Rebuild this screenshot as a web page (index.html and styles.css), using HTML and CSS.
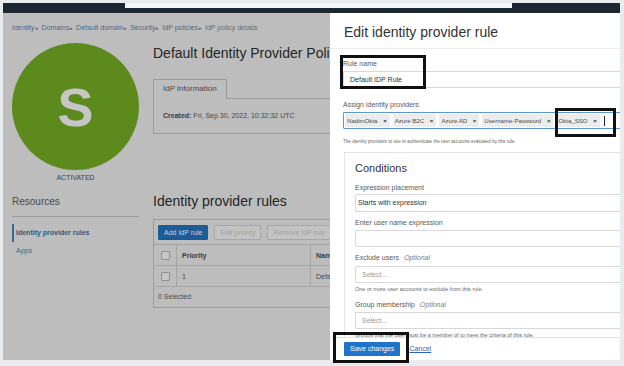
FILE: index.html
```html
<!DOCTYPE html>
<html lang="en">
<head>
    <meta charset="UTF-8">
    <meta name="viewport" content="width=device-width, initial-scale=1.0">
    <title>Edit identity provider rule</title>
    <link rel="stylesheet" href="styles.css">
</head>
<body>
    <div class="frame">
        <div class="screen">
            <div class="topbar"><div class="tab-strip"></div></div>

            <div class="stage">
                <div class="page">
                    <div class="breadcrumb">
                        <a>Identity</a><span class="sep">&#9656;</span>
                        <a>Domains</a><span class="sep">&#9656;</span>
                        <a>Default domain</a><span class="sep">&#9656;</span>
                        <a>Security</a><span class="sep">&#9656;</span>
                        <a>IdP policies</a><span class="sep">&#9656;</span>
                        <span class="current">IdP policy details</span>
                    </div>

                    <div class="content">
                        <div class="sidebar">
                            <div class="avatar">S</div>
                            <div class="status">ACTIVATED</div>
                            <div class="resources">Resources</div>
                            <ul class="nav">
                                <li class="active">Identity provider rules</li>
                                <li>Apps</li>
                            </ul>
                        </div>

                        <div class="main">
                            <h1 class="page-title">Default Identity Provider Policy</h1>

                            <div class="tabs">
                                <div class="tab">IdP information</div>
                            </div>
                            <div class="tab-panel">
                                <strong>Created:</strong> Fri, Sep 30, 2022, 10:32:32 UTC
                            </div>

                            <h2 class="section-title">Identity provider rules</h2>

                            <div class="table-box">
                                <div class="toolbar">
                                    <button class="btn btn-primary">Add IdP rule</button>
                                    <button class="btn btn-disabled">Edit priority</button>
                                    <button class="btn btn-disabled">Remove IdP rule</button>
                                </div>
                                <div class="grid-row grid-head">
                                    <div class="cell"><span class="checkbox"></span></div>
                                    <div class="cell">Priority</div>
                                    <div class="cell">Name</div>
                                </div>
                                <div class="grid-row">
                                    <div class="cell"><span class="checkbox"></span></div>
                                    <div class="cell">1</div>
                                    <div class="cell">Default IDP Rule</div>
                                </div>
                                <div class="table-footer">0 Selected</div>
                            </div>
                        </div>
                    </div>
                </div>

                <div class="drawer">
                    <div class="drawer-header">
                        <h2 class="drawer-title">Edit identity provider rule</h2>
                    </div>

                    <div class="drawer-body">
                        <label class="field-label">Rule name</label>
                        <div class="input">Default IDP Rule</div>

                        <label class="field-label spaced">Assign identity providers</label>
                        <div class="input multi">
                            <span class="chip">NadimOkta <b>&times;</b></span>
                            <span class="chip">Azure B2C <b>&times;</b></span>
                            <span class="chip">Azure AD <b>&times;</b></span>
                            <span class="chip">Username-Password <b>&times;</b></span>
                            <span class="chip">Okta_SSO <b>&times;</b></span>
                            <span class="caret"></span>
                        </div>
                        <p class="help help-first">The identity providers to use to authenticate the user accounts evaluated by this rule.</p>

                        <div class="card">
                            <h3 class="card-title">Conditions</h3>

                            <label class="field-label c1">Expression placement</label>
                            <div class="input select">Starts with expression</div>

                            <label class="field-label c2">Enter user name expression</label>
                            <div class="input"></div>

                            <label class="field-label c2">Exclude users <em>Optional</em></label>
                            <div class="input placeholder c3">Select...</div>
                            <p class="help">One or more user accounts to exclude from this rule.</p>

                            <label class="field-label c4">Group membership <em>Optional</em></label>
                            <div class="input placeholder">Select...</div>
                            <p class="help">Groups that the user must be a member of to meet the criteria of this rule.</p>
                        </div>
                    </div>

                    <div class="drawer-footer">
                        <button class="btn-save">Save changes</button>
                        <a class="cancel">Cancel</a>
                    </div>
                </div>
            </div>
        </div>

        <!-- highlight boxes drawn over the screenshot -->
        <div class="mark mark-name"></div>
        <div class="mark mark-okta"></div>
        <div class="mark mark-save"></div>
    </div>
</body>
</html>
```

FILE: styles.css
```css
* {
    box-sizing: border-box;
}
body {
    margin: 0;
    font-family: "Liberation Sans", Arial, sans-serif;
    color: #333;
    background-color: #e9ecef;
}
.frame {
    position: relative;
    width: 624px;
    height: 366px;
    padding: 3px 0 0 3px;
    overflow: hidden;
    background-color: #e9ecef;
}
.screen {
    width: 617px;
    height: 357px;
    display: flex;
    flex-direction: column;
    overflow: hidden;
}
.topbar {
    position: relative;
    height: 10px;
    flex-shrink: 0;
    background-color: #1d2731;
}
.tab-strip {
    position: absolute;
    left: 122px;
    top: 0;
    width: 387px;
    height: 5px;
    background-color: #f4f5f6;
}
.stage {
    position: relative;
    flex: 1;
    overflow: hidden;
}

/* dimmed page behind the drawer */
.page {
    height: 100%;
    padding: 10px 0 0 9px;
    background-color: #bdbdbd;
    color: #474747;
}
.breadcrumb {
    font-size: 7px;
    line-height: 10px;
    white-space: nowrap;
}
.breadcrumb a {
    color: #46698d;
}
.breadcrumb .sep {
    font-size: 5px;
    margin: 0 1px;
    color: #555;
}
.breadcrumb .current {
    color: #6a6a6a;
}
.content {
    display: flex;
    margin-top: 10px;
}
.sidebar {
    width: 127px;
    flex-shrink: 0;
}
.avatar {
    width: 127px;
    height: 127px;
    border-radius: 50%;
    background-color: #5c8a1d;
    color: #c6c6c6;
    font-size: 54px;
    font-weight: bold;
    display: flex;
    align-items: center;
    justify-content: center;
}
.status {
    margin-top: 3px;
    text-align: center;
    font-size: 7px;
    line-height: 10px;
    color: #3e3e3e;
}
.resources {
    margin-top: 12px;
    padding-bottom: 7px;
    border-bottom: 1px solid #9f9f9f;
    font-size: 10px;
    line-height: 14px;
    color: #4a4a4a;
}
.nav {
    list-style: none;
    margin: 7px 0 0;
    padding: 0;
}
.nav li {
    font-size: 7px;
    line-height: 18px;
    padding-left: 4px;
    color: #3f6790;
}
.nav li.active {
    border-left: 2px solid #3c6890;
    padding-left: 2px;
    font-weight: bold;
    color: #2f5882;
}
/* the drawer covers everything right of x 330, so the main column stops there */
.main {
    margin-left: 14px;
    flex-shrink: 0;
    width: 177px;
    overflow: hidden;
}
.page-title,
.section-title {
    margin: 0;
    font-size: 14px;
    line-height: 20px;
    font-weight: normal;
    color: #242424;
    white-space: nowrap;
}
.tabs {
    display: flex;
    margin-top: 16px;
}
.tab {
    position: relative;
    z-index: 1;
    height: 20px;
    margin-bottom: -1px;
    padding: 0 9px;
    border: 1px solid #9a9a9a;
    border-bottom: none;
    background-color: #bdbdbd;
    font-size: 8px;
    line-height: 18px;
    color: #474747;
}
.tab-panel {
    width: 300px;
    height: 36px;
    padding: 12px 9px;
    border: 1px solid #9a9a9a;
    font-size: 7px;
    line-height: 10px;
    white-space: nowrap;
}
.tab-panel strong {
    color: #3b3b3b;
}
.section-title {
    margin-top: 57px;
}
.table-box {
    margin-top: 8px;
    width: 300px;
    border: 1px solid #9c9c9c;
    font-size: 7px;
}
.toolbar {
    display: flex;
    gap: 6px;
    padding: 5px 4px 4px;
    border-bottom: 1px solid #a4a4a4;
}
.btn {
    height: 15px;
    padding: 0 5px;
    border: 1px solid #a6a6a6;
    border-radius: 1px;
    font-family: inherit;
    font-size: 7px;
    line-height: 13px;
    white-space: nowrap;
}
.btn-primary {
    background-color: #1c5b98;
    border-color: #1c5b98;
    color: #c7d2de;
}
.btn-disabled {
    background-color: #c3c3c3;
    color: #a2a2a2;
}
.grid-row {
    display: grid;
    grid-template-columns: 23px 134px 1fr;
    height: 21px;
    border-bottom: 1px solid #a4a4a4;
}
.grid-head {
    font-weight: bold;
    color: #3a3a3a;
}
.cell {
    display: flex;
    align-items: center;
    padding-left: 5px;
    border-right: 1px solid #a4a4a4;
    white-space: nowrap;
}
.cell:first-child {
    justify-content: center;
    padding-left: 0;
}
.checkbox {
    width: 9px;
    height: 9px;
    border: 1px solid #8f8f8f;
    border-radius: 1px;
    background-color: #c6c6c6;
}
.table-footer {
    height: 20px;
    padding-left: 4px;
    line-height: 20px;
    color: #4a4a4a;
}

/* drawer */
.drawer {
    position: absolute;
    top: 0;
    right: 0;
    bottom: 0;
    width: 290px;
    display: flex;
    flex-direction: column;
    background-color: #fff;
    overflow: hidden;
}
.drawer-header {
    padding: 9px 14px 6px;
    border-bottom: 1px solid #ececec;
}
.drawer-title {
    margin: 0;
    font-size: 14px;
    line-height: 20px;
    font-weight: normal;
    color: #333;
    white-space: nowrap;
}
.drawer-body {
    flex: 1;
    overflow: hidden;
    padding-left: 13px;
}
.field-label {
    display: block;
    margin-top: 10px;
    font-size: 7px;
    line-height: 10px;
    color: #585858;
    white-space: nowrap;
}
.field-label.spaced {
    margin-top: 12px;
}
.field-label em {
    margin-left: 3px;
    color: #7a7a7a;
}
.input {
    width: 300px;
    height: 17px;
    margin-top: 2px;
    padding-left: 6px;
    border: 1px solid #d8d8d8;
    border-radius: 1px;
    font-size: 7px;
    line-height: 15px;
    color: #333;
    white-space: nowrap;
}
.multi {
    display: flex;
    align-items: center;
    gap: 3px;
    padding-left: 1px;
    border-color: #5a97d3;
}
.chip {
    height: 13px;
    padding: 0 3px 0 2px;
    background-color: #ececec;
    border-radius: 1px;
    font-size: 6.1px;
    line-height: 13px;
    color: #4a4a4a;
}
.chip b {
    margin-left: 4px;
    font-size: 6px;
    color: #333;
}
.caret {
    width: 1px;
    height: 10px;
    margin-left: 1px;
    background-color: #222;
}
.help {
    margin: 2px 0 0;
    font-size: 5.5px;
    line-height: 8px;
    color: #666;
    white-space: nowrap;
}
.help-first {
    margin-top: 9px;
    font-size: 4.6px;
}
.card {
    width: 300px;
    height: 300px;
    margin: 6px 0 0 1px;
    padding: 7px 0 0 10px;
    border: 1px solid #e3e3e3;
}
.card-title {
    margin: 0;
    font-size: 11px;
    line-height: 16px;
    font-weight: normal;
    color: #333;
}
.card .field-label.c1 {
    margin-top: 7px;
}
.card .field-label.c2 {
    margin-top: 6px;
}
.card .field-label.c4 {
    margin-top: 7px;
}
.card .input {
    width: 280px;
}
.select {
    height: 18px;
    margin-top: 1px;
    padding-left: 2px;
    line-height: 16px;
}
.placeholder {
    padding-left: 6px;
    color: #9a9a9a;
}
.c3 {
    margin-top: 3px;
}
.drawer-footer {
    height: 23px;
    flex-shrink: 0;
    display: flex;
    align-items: flex-start;
    padding: 4px 0 0 14px;
    border-top: 1px solid #e2e2e2;
    background-color: #fff;
}
.btn-save {
    height: 14px;
    padding: 0 6px;
    border: none;
    border-radius: 1px;
    background-color: #1f73c8;
    color: #fff;
    font-family: inherit;
    font-size: 7px;
    line-height: 14px;
}
.cancel {
    margin-left: 9px;
    font-size: 7px;
    line-height: 14px;
    color: #2b63bb;
    text-decoration: underline;
}

/* annotation boxes */
.mark {
    position: absolute;
    border: 3px solid #111;
}
.mark-name {
    left: 340px;
    top: 55px;
    width: 86px;
    height: 34px;
}
.mark-okta {
    left: 555px;
    top: 108px;
    width: 61px;
    height: 29px;
}
.mark-save {
    left: 333px;
    top: 332px;
    width: 76px;
    height: 31px;
}
```
